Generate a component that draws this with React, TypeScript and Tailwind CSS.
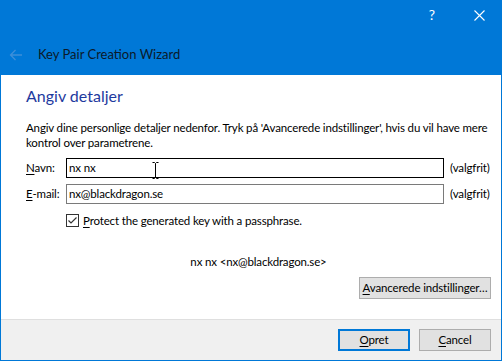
import React from "react";

const font = { fontFamily: 'Lato, "Noto Sans", sans-serif' };

const Underlined = ({ first, rest }: { first: string; rest: string }) => (
  <span className="whitespace-nowrap">
    <span className="underline underline-offset-2">{first}</span>
    {rest}
  </span>
);

export default function App() {
  return (
    <div
      className="w-[502px] h-[361px] bg-[#0078d7] flex flex-col px-px pb-px text-black"
      style={font}
    >
      {/* title bar */}
      <div className="h-[30px] flex justify-end items-center text-white">
        <span className="text-[14px] leading-none w-[44px] text-center mr-[1px]">?</span>
        <div className="w-[46px] flex justify-center pl-[3px]">
          <svg width="11" height="11" viewBox="0 0 11 11">
            <path d="M0.5 0.5 L10.5 10.5 M10.5 0.5 L0.5 10.5" stroke="white" strokeWidth="1.1" />
          </svg>
        </div>
      </div>

      {/* wizard header */}
      <div className="h-[45px] flex items-center pl-[8px] pt-[4px]">
        <svg width="14" height="12" viewBox="0 0 14 12" className="mr-[15px]">
          <path d="M13 6 H1.5 M6.5 1 L1.5 6 L6.5 11" fill="none" stroke="#3d8fd9" strokeWidth="1.3" />
        </svg>
        <span className="text-[13px] text-[#0b1a2a]">Key Pair Creation Wizard</span>
      </div>

      {/* content */}
      <div className="flex-1 bg-white flex flex-col pl-[25px] pr-[10px] pt-[10px] text-[11.5px] tracking-[-0.15px]">
        <h1 className="text-[16px] leading-[22px] tracking-normal text-[#1e3a9e]">Angiv detaljer</h1>
        <p className="leading-[15px] mt-[13px]">
          Angiv dine personlige detaljer nedenfor. Tryk på 'Avancerede indstillinger', hvis du vil have mere
          kontrol over parametrene.
        </p>

        <div className="grid grid-cols-[34px_378px_auto] gap-x-[6px] gap-y-[6px] items-center mt-[8px]">
          <Underlined first="N" rest="avn:" />
          <div className="relative h-[20px] border border-[#000] flex items-center px-[2px]">
            nx nx
            <svg width="7" height="17" viewBox="0 0 7 17" className="absolute left-[85px] top-[3px]">
              <path d="M0.5 0.5 H2.5 L3.5 1.5 L4.5 0.5 H6.5 M3.5 1.5 V15.5 M0.5 16.5 H2.5 L3.5 15.5 L4.5 16.5 H6.5" fill="none" stroke="#000" strokeWidth="1" />
            </svg>
          </div>
          <span>(valgfrit)</span>

          <Underlined first="E" rest="-mail:" />
          <div className="h-[20px] border border-[#7a7a7a] flex items-center px-[2px]">nx@blackdragon.se</div>
          <span>(valgfrit)</span>

          <div />
          <div className="flex items-center gap-[4px] mt-[2px]">
            <svg width="13" height="13" viewBox="0 0 13 13">
              <rect x="0.5" y="0.5" width="12" height="12" fill="white" stroke="#333" />
              <path d="M2.5 6.5 L5 9 L10.5 3.5" fill="none" stroke="#333" strokeWidth="1.2" />
            </svg>
            <Underlined first="P" rest="rotect the generated key with a passphrase." />
          </div>
          <div />
        </div>

        <div className="text-center mt-[24px]">nx nx &lt;nx@blackdragon.se&gt;</div>

        <div className="flex justify-end mt-[6px]">
          <button className="w-[132px] h-[22px] bg-[#e1e1e1] border border-[#adadad]">
            <Underlined first="A" rest="vancerede indstillinger…" />
          </button>
        </div>
      </div>

      {/* footer */}
      <div className="h-[41px] bg-[#f0f0f0] border-t border-[#dfdfdf] flex justify-end items-center gap-[9px] pr-[10px] pb-[1px] text-[11.5px] tracking-[-0.15px]">
        <button className="w-[72px] h-[22px] bg-[#e1e1e1] border-2 border-[#0078d7]">
          <Underlined first="O" rest="pret" />
        </button>
        <button className="w-[72px] h-[22px] bg-[#e1e1e1] border border-[#adadad]">
          <Underlined first="C" rest="ancel" />
        </button>
      </div>
    </div>
  );
}
